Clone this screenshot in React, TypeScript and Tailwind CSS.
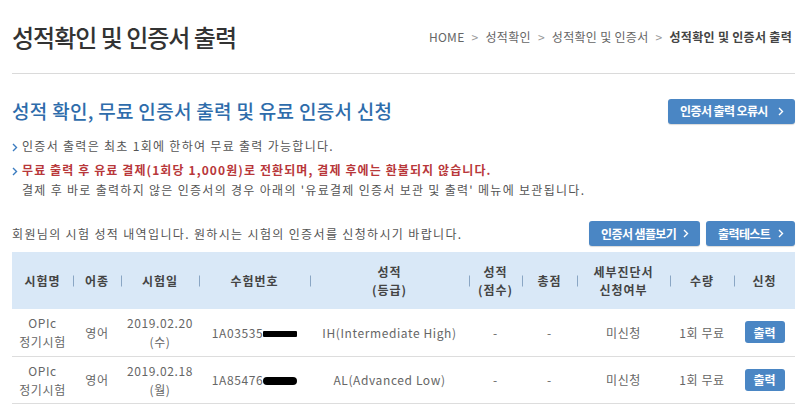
import React from 'react';

const cols = [61, 48, 78, 111, 159, 53, 55, 93, 64, 61];

const Chevron: React.FC = () => (
  <svg width="6" height="9" viewBox="0 0 6 9" className="inline-block shrink-0">
    <path d="M1 1l3.5 3.5L1 8" stroke="currentColor" strokeWidth="1.4" fill="none" />
  </svg>
);

const BlueButton: React.FC<{ label: string; className?: string }> = ({ label, className }) => (
  <button
    className={`h-[25px] flex items-center justify-between pl-[12px] pr-[11px] rounded-[3px] bg-[#4a86c4] text-white text-[12px] font-bold tracking-[-0.6px] whitespace-nowrap shadow-[0_1px_1px_rgba(0,0,0,0.15)] ${className ?? ''}`}
  >
    <span>{label}</span>
    <Chevron />
  </button>
);

const rows = [
  { no: '1A03535', date: '2019.02.20', day: '(수)', grade: 'IH(Intermediate High)', blob: 'rounded-[1px] w-[34px] h-[6px]' },
  { no: '1A85476', date: '2019.02.18', day: '(월)', grade: 'AL(Advanced Low)', blob: 'rounded-full w-[34px] h-[8px]' },
];

const headers: React.ReactNode[] = [
  '시험명',
  '어종',
  '시험일',
  '수험번호',
  <>성적<br />(등급)</>,
  <>성적<br />(점수)</>,
  '총점',
  <>세부진단서<br />신청여부</>,
  '수량',
  '신청',
];

const App: React.FC = () => {
  return (
    <div className="w-[804px] h-[412px] overflow-hidden bg-white font-['Noto_Sans_CJK_KR','Noto_Sans',sans-serif] text-[#555]">
      <div className="ml-3 w-[783px]">
        {/* page header */}
        <div className="h-[74px] flex items-center justify-between border-b border-[#dadada]">
          <h1 className="text-[24px] leading-[30px] font-medium text-[#333] tracking-[-1px]">성적확인 및 인증서 출력</h1>
          <div className="flex items-center gap-[7px] text-[12px] text-[#666] tracking-[0.3px] pr-[3px]">
            <span>HOME</span>
            <span className="text-[#999]">&gt;</span>
            <span>성적확인</span>
            <span className="text-[#999]">&gt;</span>
            <span>성적확인 및 인증서</span>
            <span className="text-[#999]">&gt;</span>
            <span className="font-bold text-[#444]">성적확인 및 인증서 출력</span>
          </div>
        </div>

        {/* section title */}
        <div className="mt-[24px] flex items-center justify-between">
          <h2 className="text-[19px] leading-[26px] font-medium text-[#2e6cab] tracking-[0.3px]">
            성적 확인, 무료 인증서 출력 및 유료 인증서 신청
          </h2>
          <BlueButton label="인증서 출력 오류시" className="w-[127px]" />
        </div>

        {/* notices */}
        <div className="mt-[12px] text-[12px] leading-[20px] tracking-[1.3px]">
          <p className="flex items-center gap-[4px]">
            <span className="text-[#3b7cc0]"><Chevron /></span>
            <span>인증서 출력은 최초 1회에 한하여 무료 출력 가능합니다.</span>
          </p>
          <p className="mt-[4px] flex items-center gap-[4px]">
            <span className="text-[#3b7cc0]"><Chevron /></span>
            <span className="font-bold text-[#b8373a] tracking-[1.1px]">
              무료 출력 후 유료 결제(1회당 1,000원)로 전환되며, 결제 후에는 환불되지 않습니다.
            </span>
          </p>
          <p className="pl-[10px]">
            결제 후 바로 출력하지 않은 인증서의 경우 아래의 '유료결제 인증서 보관 및 출력' 메뉴에 보관됩니다.
          </p>
        </div>

        {/* table toolbar */}
        <div className="mt-[21px] flex items-center justify-between">
          <p className="text-[12px] tracking-[1.35px]">
            회원님의 시험 성적 내역입니다. 원하시는 시험의 인증서를 신청하시기 바랍니다.
          </p>
          <div className="flex gap-[6px]">
            <BlueButton label="인증서 샘플보기" className="w-[111px]" />
            <BlueButton label="출력테스트" className="w-[89px]" />
          </div>
        </div>

        {/* table */}
        <table className="mt-[6px] w-[783px] table-fixed border-collapse text-[12px]">
          <colgroup>
            {cols.map((w, i) => (
              <col key={i} style={{ width: w }} />
            ))}
          </colgroup>
          <thead>
            <tr className="h-[57px] bg-[#d9e8f7]">
              {headers.map((h, i) => (
                <th
                  key={i}
                  className={`relative font-bold text-[#444] leading-[18px] tracking-[1px] text-center ${
                    i > 0
                      ? "before:content-[''] before:absolute before:left-0 before:top-1/2 before:-translate-y-1/2 before:w-px before:h-[11px] before:bg-[#8aa6c4]"
                      : ''
                  }`}
                >
                  {h}
                </th>
              ))}
            </tr>
          </thead>
          <tbody>
            {rows.map((r) => (
              <tr key={r.no} className="h-[47px] border-b border-[#dddddd] text-center text-[#666] leading-[19px] tracking-[0.6px]">
                <td>
                  OPIc
                  <br />
                  정기시험
                </td>
                <td>영어</td>
                <td>
                  {r.date}
                  <br />
                  {r.day}
                </td>
                <td>
                  <span className="inline-flex items-center">
                    {r.no}
                    <span className={`inline-block bg-black ${r.blob} mt-[3px]`} />
                  </span>
                </td>
                <td>{r.grade}</td>
                <td>-</td>
                <td>-</td>
                <td>미신청</td>
                <td>1회 무료</td>
                <td>
                  <button className="w-[40px] h-[22px] rounded-[3px] bg-[#4a86c4] text-white text-[12px] font-bold tracking-normal">
                    출력
                  </button>
                </td>
              </tr>
            ))}
          </tbody>
        </table>
      </div>
    </div>
  );
};

export default App;
